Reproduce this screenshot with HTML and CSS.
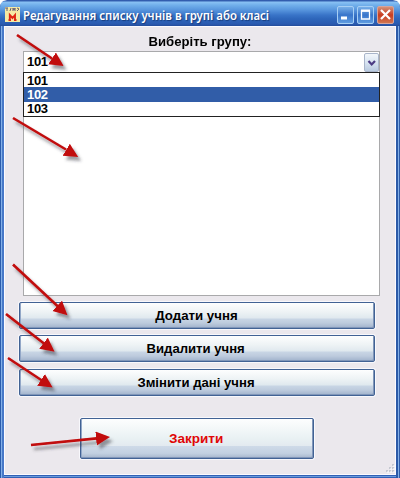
FILE: index.html
```html
<!DOCTYPE html>
<html lang="uk">
<head>
<meta charset="utf-8">
<title>Редагування списку учнів в групі або класі</title>
<link rel="stylesheet" href="styles.css">
</head>
<body>
<div class="window">
  <header class="titlebar">
    <svg class="app-icon" width="15" height="15" viewBox="0 0 15 15">
      <rect width="15" height="15" fill="#f5e9a4"/>
      <path d="M0 1h3M2 1v3M5 4l1-3M8 4V1l1 2 1-2v3M12 1l2 1-2 2" fill="none" stroke="#655c72" stroke-width="1"/>
      <path d="M3.500 13h2.500M4.800 13V8l2.700 3L10 8v5M9 13h2.500" fill="none" stroke="#e02412" stroke-width="1.9"/>
    </svg>
    <h1 class="title"><span>Редагування списку учнів в групі або класі</span></h1>
    <div class="controls">
      <button class="control" aria-label="Згорнути"><svg width="15" height="15"><path d="M3 11h6" stroke="#fff" stroke-width="3"/></svg></button>
      <button class="control" aria-label="Розгорнути"><svg width="15" height="15"><path d="M3.500 4h8v8h-8z" fill="none" stroke="#fff" stroke-width="1.3"/><path d="M3 3.500h9" stroke="#fff" stroke-width="2"/></svg></button>
      <button class="control control-close" aria-label="Вийти"><svg width="15" height="15"><path d="M3 3l9 9M12 3l-9 9" stroke="#fff" stroke-width="2.2"/></svg></button>
    </div>
  </header>
  <main class="content">
    <label class="label"><span class="label-text">Виберіть групу:</span></label>
    <div class="combo">
      <span class="combo-value">101</span>
      <span class="combo-button"><svg width="13" height="18"><path d="M3.500 7l3.200 3.500L10 7" fill="none" stroke="#4c3c84" stroke-width="2.2"/></svg></span>
    </div>
    <div class="list">
      <ul class="options">
        <li>101</li>
        <li class="selected">102</li>
        <li>103</li>
      </ul>
    </div>
    <div class="actions">
      <button class="action"><span class="add-text">Додати учня</span></button>
      <button class="action"><span class="delete-text">Видалити учня</span></button>
      <button class="action"><span class="edit-text">Змінити дані учня</span></button>
    </div>
    <button class="action action-exit"><span class="exit-text">Закрити</span></button>
  </main>
  <svg class="grip" width="10" height="10"><path d="M7 1h2M4 4h2M7 4h2M1 7h2M4 7h2M7 7h2" stroke="#c5c8d1" stroke-width="2"/><path d="M8 2h2M5 5h2M8 5h2M2 8h2M5 8h2M8 8h2" stroke="#fff" stroke-width="1"/></svg>
  <svg class="arrows" width="400" height="478" viewBox="0 0 400 478">
    <defs>
      <filter id="shadow" filterUnits="userSpaceOnUse" x="0" y="0" width="400" height="478">
        <feDropShadow dx="3" dy="4" stdDeviation="1.5" flood-color="#37343f" flood-opacity=".5"/>
      </filter>
      <marker id="head" markerUnits="userSpaceOnUse" markerWidth="16" markerHeight="16" refX="12" refY="7" orient="auto"><path d="M0 0L14 7L0 14z" fill="#c10808"/></marker>
    </defs>
    <g stroke="#c10808" stroke-width="2.6" fill="none">
      <g filter="url(#shadow)"><path d="M17 35L52 58.500"/><path stroke="none" marker-end="url(#head)" d="M17 35L62 65"/></g>
      <g filter="url(#shadow)"><path d="M13 118L66 149.500"/><path stroke="none" marker-end="url(#head)" d="M13 118L76.500 156"/></g>
      <g filter="url(#shadow)"><path d="M13 264.500L58 306.500"/><path stroke="none" marker-end="url(#head)" d="M13 264.500L66 314"/></g>
      <g filter="url(#shadow)"><path d="M6 314L44 343.500"/><path stroke="none" marker-end="url(#head)" d="M6 314L53 350.500"/></g>
      <g filter="url(#shadow)"><path d="M8 358L42 380.500"/><path stroke="none" marker-end="url(#head)" d="M8 358L51 386.500"/></g>
      <g filter="url(#shadow)"><path d="M31 445L97 438.400"/><path stroke="none" marker-end="url(#head)" d="M31 445L108 437.300"/></g>
    </g>
  </svg>
</div>
</body>
</html>
```
FILE: styles.css
```css
* { box-sizing: border-box; }

body {
  margin: 0;
  background: #fff;
  font: bold 13px "Liberation Sans", sans-serif;
  color: #000;
}

.window {
  position: relative;
  width: 400px;
  height: 478px;
  padding: 0 4px 4px;
  border-radius: 7px 7px 0 0;
  background: linear-gradient(90deg, #2b5cad 0 1px, #83b0e8 1px 2px, #4778c8 2px 4px, transparent 4px 396px, #2c5aa8 396px 398px, #83b0e8 398px 399px, #315da8 399px), linear-gradient(transparent 475px, #3060b5 475px 476px, #6b9bdd 476px 477px, #3060b5 477px);
  overflow: hidden;
}

.titlebar {
  display: flex;
  align-items: center;
  height: 26px;
  margin: 0 -4px;
  padding: 3px 6px 0 5px;
  border-radius: 7px 7px 0 0;
  background: linear-gradient(#3058aa 0, #3562b2 1px, #8ac2f4 2px, #72b0eb 5px, #5795dd 10px, #3974c8 15px, #2d65ba 19px, #2a5ab0 24px, #254c9a 26px);
}

.app-icon { flex: none; }

.title {
  flex: 1;
  margin: 0 0 0 3px;
  font: 600 12px/20px "Noto Sans", sans-serif;
  color: #fff;
  text-shadow: 1px 1px 1px #173c7c;
  white-space: nowrap;
}

.title span { display: inline-block; transform: translateY(1px) scaleX(.95); transform-origin: left; }

.controls { display: flex; gap: 3px; }

.control {
  display: grid;
  place-items: center;
  width: 17px;
  height: 18px;
  padding: 0;
  border: 1px solid #a7cff4;
  border-radius: 2px;
  background: linear-gradient(#77afe8, #3975ca 50%, #5e9be0);
}

.control-close { border-color: #d7a39b; background: linear-gradient(#d49178, #c83c20 50%, #d07550); }

.content {
  display: flex;
  flex-direction: column;
  height: 449px;
  padding: 7px 15px 0;
  border: 1px solid #fbfaff;
  background: #ebe8ed;
}

.label { height: 17px; line-height: 16px; text-align: center; }
.label span, .action span { display: inline-block; white-space: nowrap; }

.combo {
  display: flex;
  align-items: center;
  justify-content: space-between;
  height: 22px;
  margin: 0 0 0 3px;
  padding: 0 0 0 3px;
  border: 1px solid #a9a9ab;
  background: #fff;
}

.combo-value { line-height: 20px; letter-spacing: -.3px; }

.combo-button {
  width: 15px;
  height: 19px;
  border: 1px solid #a9b5ca;
  border-radius: 2px;
  background: linear-gradient(#f3f7fb, #d8e4f1 50%, #b9cae0);
}

.combo-button svg { display: block; }

.list {
  height: 224px;
  margin: -1px 0 0 3px;
  border: solid #a9a9ab;
  border-width: 0 1px 1px;
  background: #fff;
}

.options {
  height: 45px;
  margin: 0 -1px;
  padding: 0;
  border: 1px solid #222;
  list-style: none;
  background: #fff;
}

.options li {
  height: 14px;
  padding-left: 3px;
  line-height: 15px;
  letter-spacing: -.3px;
}

.options li:last-child { line-height: 13px; }
.options .selected { height: 15px; color: #fff; background: #315da8; }

.actions { display: flex; flex-direction: column; gap: 6px; margin-top: 6px; }

.action {
  width: 356px;
  height: 27px;
  margin: 0 0 0 -1px;
  padding: 0;
  border: 1px solid #416294;
  border-radius: 2px;
  background: linear-gradient(#fdfefe, #eef3f5 35%, #dfe8ee 61%, #c9d6e5 63%, #bdcbdd 80%, #9fb1cb);
  box-shadow: 0 0 0 1px #f8f8fc, inset -1px -1px #8096b9, inset 1px 0 #92a7c7;
  font: inherit;
  line-height: 24px;
  color: #000;
}

.action:nth-child(3) { margin-top: 1px; }

.action-exit {
  width: 234px;
  height: 41px;
  margin: 22px 0 0 60px;
  line-height: 38px;
  color: #e00707;
  background: linear-gradient(#fdfefe, #e9f1f3 50%, #e3eaf0 68%, #cedae8 70%, #c2d0e1 88%, #a5b5cc);
}

.label-text { transform: scaleX(1.01); }
.add-text { transform: translateX(-1px) scaleX(1.02); }
.delete-text { transform: translateX(-1px) scaleX(1.01); }
.edit-text { transform: translateX(-1px) scaleX(1.01); }
.exit-text { transform: translateX(-1px) scaleX(1.04); }

.grip { position: absolute; right: 5px; bottom: 4px; }
.arrows { position: absolute; inset: 0; pointer-events: none; }
```
